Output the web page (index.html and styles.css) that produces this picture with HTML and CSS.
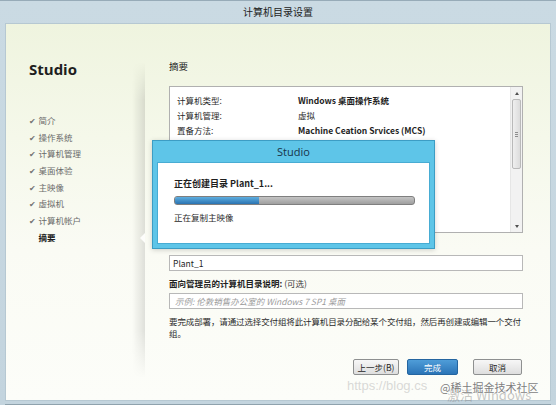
FILE: index.html
```html
<!DOCTYPE html>
<html lang="zh-CN">
<head>
<meta charset="utf-8">
<title>计算机目录设置</title>
<link rel="stylesheet" href="styles.css">
</head>
<body>
<div class="window">
  <div class="titlebar">计算机目录设置</div>
  <div class="client">
    <aside class="sidebar">
      <div class="brand">Studio</div>
      <ul class="steps">
        <li class="done"><span class="check">✔</span>简介</li>
        <li class="done"><span class="check">✔</span>操作系统</li>
        <li class="done"><span class="check">✔</span>计算机管理</li>
        <li class="done"><span class="check">✔</span>桌面体验</li>
        <li class="done"><span class="check">✔</span>主映像</li>
        <li class="done"><span class="check">✔</span>虚拟机</li>
        <li class="done"><span class="check">✔</span>计算机帐户</li>
        <li class="current"><span class="check"></span>摘要</li>
      </ul>
    </aside>
    <main class="main">
      <h2 class="section-title">摘要</h2>
      <div class="listbox">
        <div class="rows">
          <div class="row"><span class="k">计算机类型:</span><span class="v b">Windows 桌面操作系统</span></div>
          <div class="row"><span class="k">计算机管理:</span><span class="v">虚拟</span></div>
          <div class="row"><span class="k">置备方法:</span><span class="v b">Machine Ceation Srvices (MCS)</span></div>
          <div class="row"><span class="k">桌面类型:</span><span class="v">用户每次登录时都连接到一个新桌面</span></div>
        </div>
        <div class="scrollbar">
          <div class="arrow"><span class="tri up"></span></div>
          <div class="track">
            <div class="thumb"><span class="grip"></span></div>
          </div>
          <div class="arrow"><span class="tri down"></span></div>
        </div>
      </div>
      <div class="field">Plant_1</div>
      <div class="label"><b>面向管理员的计算机目录说明:</b> (可选)</div>
      <div class="field placeholder">示例: 伦敦销售办公室的 Windows 7 SP1 桌面</div>
      <p class="note">要完成部署，请通过选择交付组将此计算机目录分配给某个交付组，然后再创建或编辑一个交付组。</p>
      <div class="buttons">
        <button class="btn back">上一步(B)</button>
        <button class="btn primary">完成</button>
        <button class="btn cancel">取消</button>
      </div>
    </main>
  </div>
  <div class="frame-bottom"></div>

  <div class="dialog">
    <div class="dialog-title">Studio</div>
    <div class="dialog-body">
      <div class="dialog-status">正在创建目录 Plant_1...</div>
      <div class="progress"><div class="progress-fill" style="width: 35%"></div></div>
      <div class="dialog-sub">正在复制主映像</div>
    </div>
  </div>

  <div class="wm-url">https://blog.cs</div>
  <div class="wm-win">激活 Windows</div>
  <div class="wm-site">@稀土掘金技术社区</div>
</div>
</body>
</html>
```

FILE: styles.css
```css
* {
  box-sizing: border-box;
  margin: 0;
  padding: 0;
}

html,
body {
  width: 556px;
  height: 405px;
  overflow: hidden;
}

body {
  background: #c6d6e0;
  font-family: "Noto Sans CJK SC", "Noto Sans", sans-serif;
  font-size: 8.5px;
  color: #2a2a2a;
}

.window {
  position: relative;
  width: 556px;
  height: 405px;
  display: flex;
  flex-direction: column;
  padding: 0 5px;
  background: linear-gradient(#cadae3, #c3d4de);
  border-top: 1px solid #97abb8;
}

.titlebar {
  height: 22px;
  line-height: 22px;
  text-align: center;
  font-size: 10px;
  color: #222;
}

.client {
  height: 378px;
  display: flex;
  background: linear-gradient(180deg, #eff4df 0%, #f5f8ea 30%, #fafbf4 60%, #fcfdf9 100%);
  border: 1px solid #b6c8d2;
}

.frame-bottom {
  flex: 1;
  border-bottom: 1px solid #8fa2ad;
}

/* Sidebar */
.sidebar {
  width: 139px;
  padding: 36px 0 0 23px;
}

.brand {
  font-family: "Open Sans", "Noto Sans", sans-serif;
  font-weight: bold;
  font-size: 15px;
  line-height: 18px;
  color: #1e1e1e;
}

.steps {
  list-style: none;
  margin-top: 34px;
}

.steps li {
  height: 16.7px;
  line-height: 16.7px;
  color: #6a6a6a;
  white-space: nowrap;
}

.check {
  display: inline-block;
  width: 9.5px;
  font-size: 7.5px;
  color: #737373;
}

.steps li.current {
  color: #1a1a1a;
  font-weight: bold;
}

/* Main panel */
.main {
  flex: 1;
  position: relative;
  padding: 35px 27px 0 24px;
  display: flex;
  flex-direction: column;
}

.main::before {
  content: "";
  position: absolute;
  left: -13px;
  top: 38px;
  bottom: 22px;
  width: 13px;
  background: linear-gradient(to right, rgba(0, 0, 0, 0), rgba(0, 0, 0, 0.11));
  -webkit-mask-image: linear-gradient(to bottom, transparent, #000 12%, #000 85%, transparent);
  mask-image: linear-gradient(to bottom, transparent, #000 12%, #000 85%, transparent);
}

.main::after {
  content: "";
  position: absolute;
  left: -5px;
  top: 209px;
  border-right: 5px solid #fdfdfb;
  border-top: 5px solid transparent;
  border-bottom: 5px solid transparent;
}

.section-title {
  font-size: 9.5px;
  font-weight: normal;
  line-height: 14px;
  color: #222;
}

.listbox {
  margin-top: 13px;
  height: 147px;
  display: flex;
  background: #fff;
  border: 1px solid #b0b0b0;
}

.rows {
  flex: 1;
  padding: 6px 0 0 7px;
  overflow: hidden;
}

.row {
  display: flex;
  height: 15px;
  line-height: 15px;
  white-space: nowrap;
  color: #2a2a2a;
}

.k {
  width: 121px;
  flex: none;
}

.v.b {
  font-weight: bold;
  color: #1e1e1e;
}

.scrollbar {
  width: 12px;
  display: flex;
  flex-direction: column;
  background: #f2f2f2;
  border-left: 1px solid #e6e6e6;
}

.arrow {
  height: 12px;
  display: flex;
  align-items: center;
  justify-content: center;
}

.tri {
  width: 0;
  height: 0;
  border-left: 2.5px solid transparent;
  border-right: 2.5px solid transparent;
}

.tri.up {
  border-bottom: 3px solid #505050;
}

.tri.down {
  border-top: 3px solid #505050;
}

.track {
  flex: 1;
  padding: 0 1px;
}

.thumb {
  height: 70px;
  border: 1px solid #b9b9b9;
  border-radius: 2px;
  background: linear-gradient(to right, #efefef, #dcdcdc);
  display: flex;
  align-items: center;
  justify-content: center;
}

.grip {
  width: 3px;
  height: 5px;
  background: repeating-linear-gradient(to bottom, #8d8d8d 0 1px, transparent 1px 2px);
}

.field {
  margin-top: 22px;
  height: 16px;
  line-height: 14px;
  padding-left: 3px;
  background: #fff;
  border: 1px solid #b8b8b8;
  color: #1e1e1e;
  white-space: nowrap;
}

.label {
  margin-top: 6px;
  line-height: 12px;
  color: #3a3a3a;
}

.label b {
  color: #222;
}

.field.placeholder {
  margin-top: 4px;
  padding-left: 5px;
  color: #9c9c9c;
  font-style: italic;
}

.note {
  margin-top: 7px;
  line-height: 11.7px;
  letter-spacing: -0.12px;
  color: #2a2a2a;
}

.buttons {
  margin-top: 20px;
  display: flex;
  justify-content: flex-end;
  gap: 8px;
  padding-right: 1px;
}

.btn {
  height: 16px;
  font: inherit;
  line-height: 14px;
  color: #1e1e1e;
  border: 1px solid #8e9090;
  border-radius: 2px;
  background: linear-gradient(#f7f7f7, #dedede);
}

.btn.back {
  width: 46px;
}

.btn.primary {
  width: 51px;
  color: #fff;
  border-color: #2465a0;
  background: linear-gradient(#4f9dd8, #2b74b7);
}

.btn.cancel {
  width: 49px;
  margin-left: 7px;
}

/* Progress dialog overlay */
.dialog {
  position: absolute;
  left: 152px;
  top: 139px;
  width: 283px;
  height: 109px;
  display: flex;
  flex-direction: column;
  padding: 0 4px 4px;
  background: #5ec5e8;
  border: 1px solid #3c9dc4;
  box-shadow: 0 1px 5px rgba(0, 0, 0, 0.18);
}

.dialog-title {
  height: 21px;
  line-height: 21px;
  text-align: center;
  font-family: "Open Sans", "Noto Sans", sans-serif;
  font-size: 11px;
  color: #183449;
}

.dialog-body {
  flex: 1;
  background: #fff;
  padding: 15px 0 0 16px;
  border: 1px solid #48acd3;
}

.dialog-status {
  line-height: 12px;
  font-size: 9px;
  font-weight: bold;
  color: #1e1e1e;
}

.progress {
  margin-top: 6px;
  width: 241px;
  height: 9px;
  border: 1px solid #7f7f7f;
  border-radius: 3px;
  background: linear-gradient(#c4c4c4, #9f9f9f);
  overflow: hidden;
}

.progress-fill {
  height: 100%;
  background: linear-gradient(#5eaee0, #2a73b1);
}

.dialog-sub {
  margin-top: 6px;
  line-height: 12px;
  color: #2a2a2a;
}

/* Watermark overlays */
.wm-url {
  position: absolute;
  left: 347px;
  top: 377px;
  font-family: "Liberation Sans", sans-serif;
  font-size: 13px;
  color: rgba(180, 180, 180, 0.5);
}

.wm-win {
  position: absolute;
  left: 447px;
  top: 384px;
  font-family: "Noto Sans CJK SC", "Liberation Sans", sans-serif;
  font-size: 13px;
  color: rgba(130, 130, 130, 0.45);
}

.wm-site {
  position: absolute;
  left: 440px;
  top: 379px;
  font-size: 11px;
  line-height: 14px;
  color: #7e7e7e;
  text-shadow: 0 0 1px #fff, 0 0 2px #fff;
}
```
